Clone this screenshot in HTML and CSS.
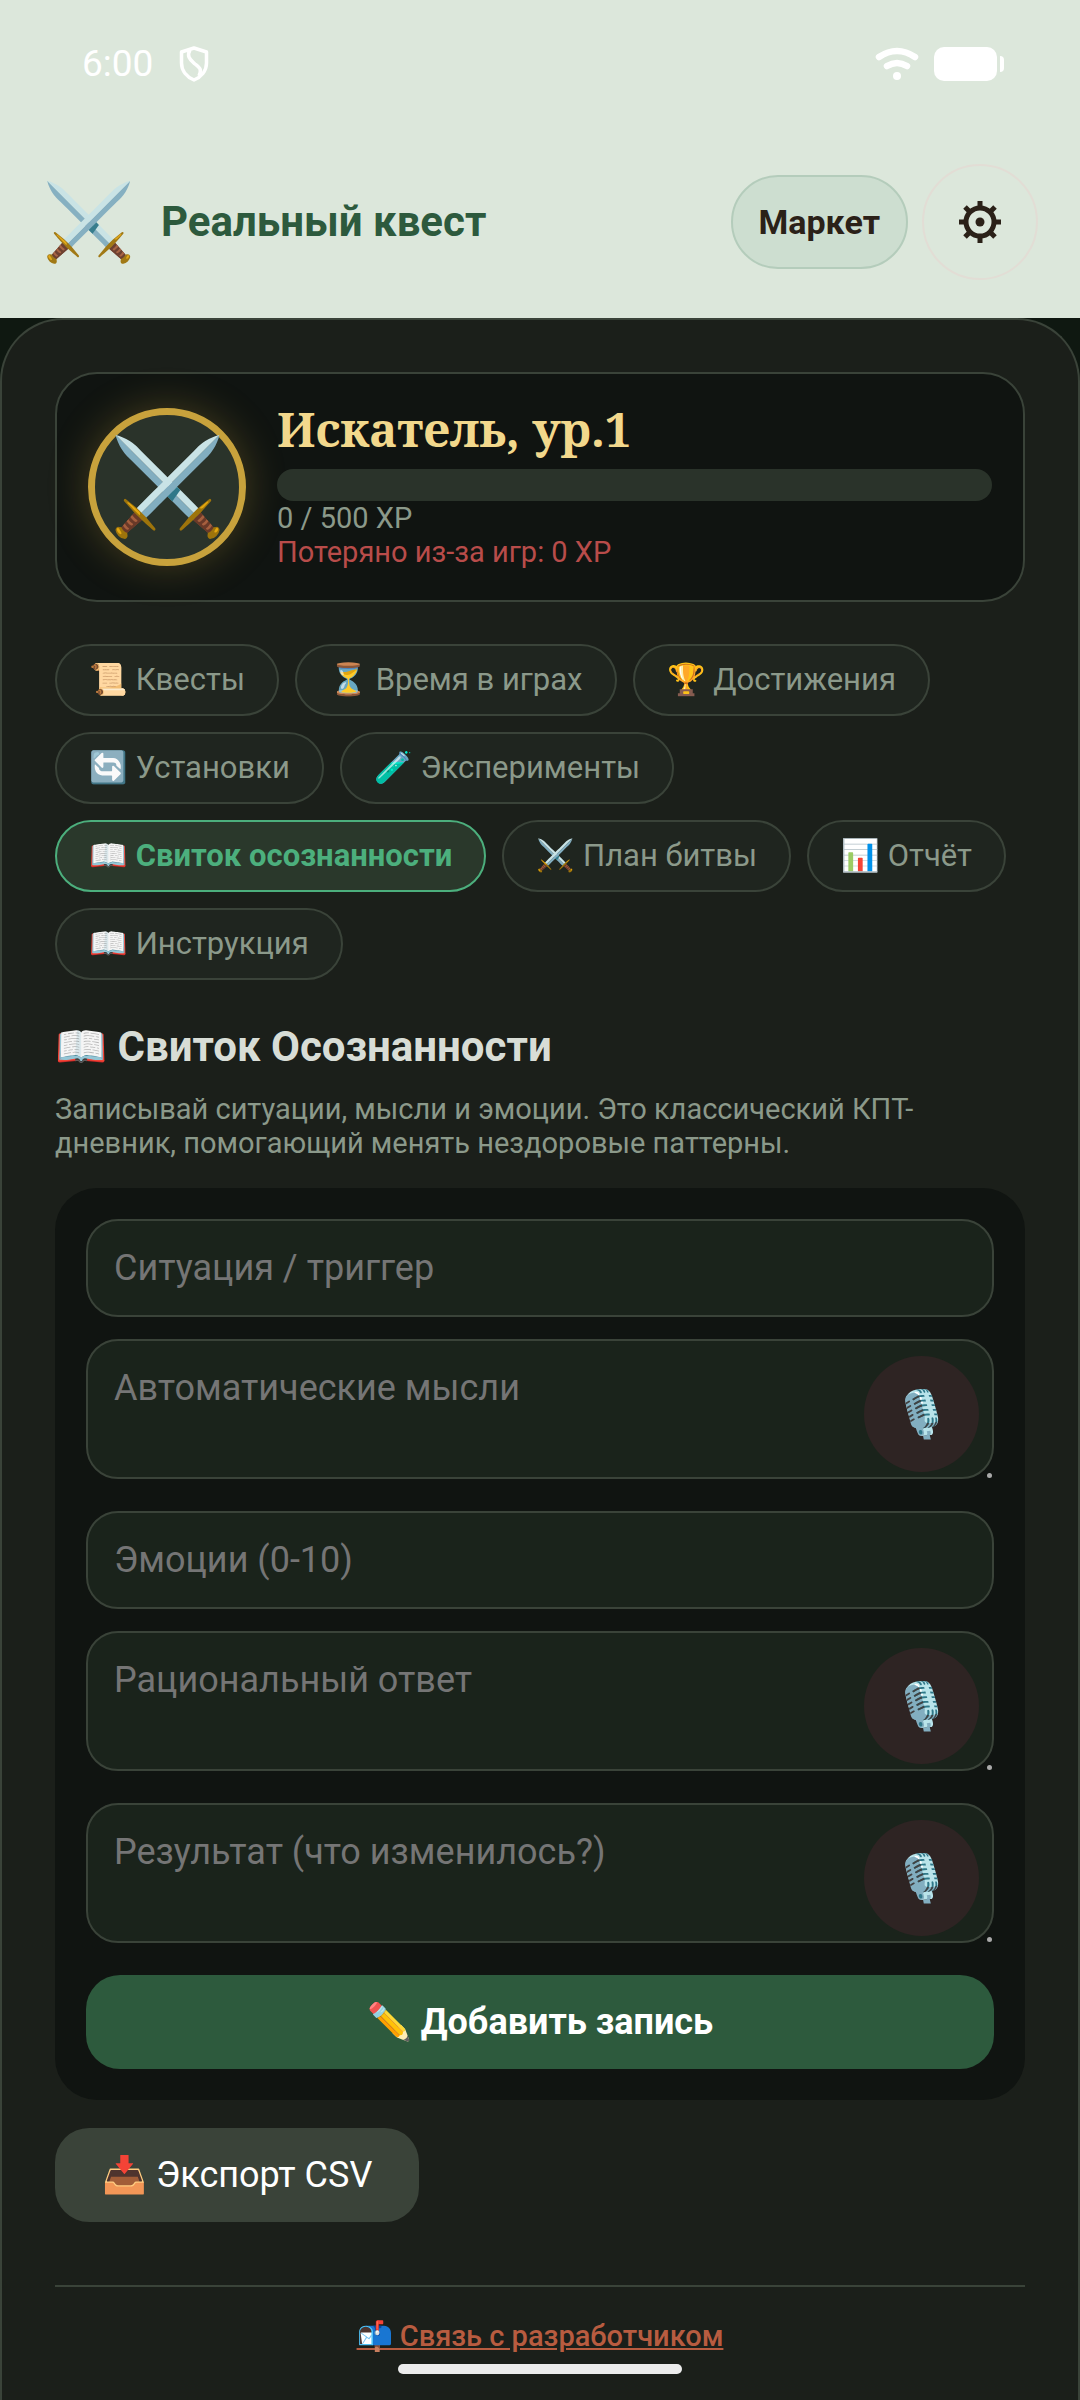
FILE: index.html
```html
<!DOCTYPE html>
<html lang="ru">
<head>
<meta charset="utf-8">
<meta name="viewport" content="width=device-width, initial-scale=1">
<title>Реальный квест</title>
<link rel="stylesheet" href="styles.css">
</head>
<body>
<div class="top">
  <div class="status">
    <span class="clock">6:00</span>
    <svg class="shield" viewBox="0 0 30 36" aria-hidden="true"><path d="M15 2 27.500 6V17C27.500 25 22 31 15 34 8 31 2.500 25 2.500 17V6Z" fill="none" stroke="#fff" stroke-width="3.500" stroke-linejoin="round"/><path d="M11 4C7 11 12 14 16 18 21 22 23 23 20 30" fill="none" stroke="#fff" stroke-width="3.500"/></svg>
    <span class="status-end">
      <svg class="wifi" viewBox="0 0 44 34" aria-hidden="true"><g fill="none" stroke="#fff" stroke-width="6.500" stroke-linecap="round"><path d="M4 10Q22-2 40 10"/><path d="M12 19Q22 13 32 19"/></g><circle cx="22" cy="29" r="4"/></svg>
      <svg class="battery" viewBox="0 0 72 34" aria-hidden="true"><rect width="63" height="34" rx="10"/><path d="M66 9q4 0 4 4v8q0 4-4 4z"/></svg>
    </span>
  </div>
  <header class="appbar">
    <span class="logo" aria-hidden="true">⚔️</span>
    <h1 class="brand">Реальный квест</h1>
    <button class="market" type="button">Маркет</button>
    <button class="gear" type="button" aria-label="Настройки"><svg viewBox="0 0 42 42" aria-hidden="true"><g stroke="#2b2118" stroke-width="5"><path d="M21 0v8M21 34v8M0 21h8M34 21h8M6 6l6 6M30 30l6 6M36 6l-6 6M12 30l-6 6"/><circle cx="21" cy="21" r="14" fill="none"/></g><circle cx="21" cy="21" r="4.500" fill="#2b2118"/></svg></button>
  </header>
</div>
<main class="sheet">
  <section class="hero">
    <div class="avatar" aria-hidden="true">⚔️</div>
    <div class="hero-info">
      <h2 class="rank">Искатель, ур.1</h2>
      <div class="xpbar"></div>
      <p class="xp">0 / 500 XP</p>
      <p class="xp lost">Потеряно из-за игр: 0 XP</p>
    </div>
  </section>
  <nav class="tabs">
    <button type="button" class="tab">📜 Квесты</button>
    <button type="button" class="tab">⏳ Время в играх</button>
    <button type="button" class="tab">🏆 Достижения</button>
    <button type="button" class="tab">🔄 Установки</button>
    <button type="button" class="tab">🧪 Эксперименты</button>
    <button type="button" class="tab active">📖 Свиток осознанности</button>
    <button type="button" class="tab">⚔️ План битвы</button>
    <button type="button" class="tab">📊 Отчёт</button>
    <button type="button" class="tab">📖 Инструкция</button>
  </nav>
  <h2 class="title">📖 Свиток Осознанности</h2>
  <p class="lead">Записывай ситуации, мысли и эмоции. Это классический КПТ-дневник, помогающий менять нездоровые паттерны.</p>
  <form class="journal">
    <input class="field" type="text" aria-label="Ситуация / триггер" placeholder="Ситуация / триггер">
    <div class="voice">
      <textarea class="field area" aria-label="Автоматические мысли" placeholder="Автоматические мысли"></textarea>
      <button class="mic" type="button" aria-label="Диктовать мысли">🎙️</button><i class="grip"></i>
    </div>
    <input class="field" type="text" aria-label="Эмоции (0-10)" placeholder="Эмоции (0-10)">
    <div class="voice">
      <textarea class="field area" aria-label="Рациональный ответ" placeholder="Рациональный ответ"></textarea>
      <button class="mic" type="button" aria-label="Диктовать ответ">🎙️</button><i class="grip"></i>
    </div>
    <div class="voice">
      <textarea class="field area" aria-label="Результат (что изменилось?)" placeholder="Результат (что изменилось?)"></textarea>
      <button class="mic" type="button" aria-label="Диктовать результат">🎙️</button><i class="grip"></i>
    </div>
    <button class="submit" type="submit">✏️ Добавить запись</button>
  </form>
  <button class="export" type="button">📥 Экспорт CSV</button>
  <footer class="foot"><a href="#contact">📬 Связь с разработчиком</a></footer>
</main>
<div class="home-bar"></div>
</body>
</html>
```
FILE: styles.css
```css
* { box-sizing: border-box; }
html { background: #0f1811; }
body {
  margin: 0;
  min-height: 100vh;
  display: flex;
  flex-direction: column;
  font-family: Roboto, "Noto Sans", sans-serif;
  color: #d8ddd6;
}
h1, h2, p { margin: 0; }
button, input, textarea { font-family: inherit; margin: 0; }
button { border: 0; padding: 0; cursor: pointer; }

.top { background: #dce7db; padding-bottom: 2px; }
.status {
  height: 128px;
  padding: 0 74px 0 82px;
  display: flex;
  align-items: center;
  gap: 26px;
  color: #fff;
}
.clock { font-size: 37px; line-height: 44px; }
.shield { width: 30px; height: 36px; }
.status-end { margin-left: auto; display: flex; align-items: center; gap: 15px; fill: #fff; }
.wifi { width: 44px; height: 34px; }
.battery { width: 72px; height: 34px; }

.appbar {
  height: 188px;
  padding: 0 42px;
  display: flex;
  align-items: center;
}
.logo { font-size: 75px; line-height: 88px; width: 119px; opacity: .95; }
.brand { font-size: 42px; line-height: 50px; font-weight: 700; color: #2d5a3d; flex: 1; }
.market {
  padding: 26px;
  border: 2px solid #b4ccbb;
  border-radius: 47px;
  background: #cdded0;
  color: #2b2118;
  font-size: 34px;
  line-height: 38px;
  font-weight: 700;
}
.gear {
  width: 116px;
  height: 116px;
  margin-left: 14px;
  border: 2px solid #e2ddd5;
  border-radius: 50%;
  background: transparent;
  display: grid;
  place-items: center;
}
.gear svg { width: 42px; height: 42px; }

.sheet {
  flex: 1;
  background: #1b1f1a;
  border: 2px solid #3a4339;
  border-bottom: 0;
  border-radius: 63px 63px 0 0;
  padding: 52px 53px 44px;
}
.hero {
  display: flex;
  align-items: center;
  gap: 31px;
  padding: 31px;
  background: #101411;
  border: 2px solid #3a4339;
  border-radius: 42px;
}
.avatar {
  width: 158px;
  height: 158px;
  flex: none;
  border: 7px solid #c8a23c;
  border-radius: 50%;
  background: #2a332a;
  box-shadow: 0 0 40px rgba(200, 162, 60, .3);
  display: grid;
  place-items: center;
  font-size: 94px;
  line-height: 110px;
}
.hero-info { flex: 1; }
.rank {
  font-family: "Noto Serif", "Liberation Serif", serif;
  font-size: 47px;
  line-height: 48px;
  padding-bottom: 16px;
  font-weight: 700;
  color: #f2d88c;
}
.xpbar { height: 32px; border-radius: 16px; background: #2a332a; }
.xp { font-size: 29px; line-height: 34px; color: #8b998a; }
.lost { color: #b84c4a; }

.tabs { display: flex; flex-wrap: wrap; gap: 16px; margin-top: 42px; }
.tab {
  padding: 16px 32px;
  border: 2px solid #3a4339;
  border-radius: 36px;
  background: #1f251f;
  color: #8b998a;
  font-size: 31px;
  line-height: 36px;
}
.tab.active { background: #2a382b; border-color: #4caf7d; color: #4caf7d; font-weight: 700; }

.title { margin-top: 42px; font-size: 42px; line-height: 50px; }
.lead { margin-top: 20px; font-size: 29px; line-height: 34px; color: #8b998a; }

.journal {
  margin-top: 28px;
  padding: 31px;
  background: #101411;
  border-radius: 42px;
  display: flex;
  flex-direction: column;
}
.field {
  display: block;
  width: 100%;
  padding: 26px;
  border: 2px solid #3a4339;
  border-radius: 32px;
  background: #1a231b;
  color: #d8ddd6;
  font-size: 36px;
  line-height: 42px;
  margin-bottom: 22px;
}
.field::placeholder { color: #757575; opacity: 1; }
.area { height: 140px; margin: 0; resize: none; overflow: hidden; }
.voice { position: relative; margin-bottom: 32px; }
.mic {
  position: absolute;
  top: 17px;
  right: 15px;
  width: 115px;
  height: 116px;
  border-radius: 50%;
  background: #2e2423;
  font-size: 46px;
  line-height: 54px;
}
.grip { position: absolute; right: 2px; bottom: 1px; width: 5px; height: 5px; border-radius: 50%; background: #aaa; }
.submit, .export {
  border-radius: 34px;
  color: #fff;
  font-size: 36px;
  line-height: 42px;
  padding: 26px 47px;
}
.submit { background: #2d5a3d; font-weight: 700; }
.export { display: block; margin-top: 28px; background: #3a4339; }
.foot {
  margin-top: 63px;
  padding-top: 32px;
  border-top: 2px solid #3a4339;
  text-align: center;
  font-size: 29px;
  line-height: 34px;
  font-weight: 500;
}
.foot a { color: #b85c40; }
.home-bar {
  position: fixed;
  bottom: 26px;
  left: 50%;
  width: 284px;
  height: 10px;
  margin-left: -142px;
  border-radius: 5px;
  background: #ececec;
}
```
